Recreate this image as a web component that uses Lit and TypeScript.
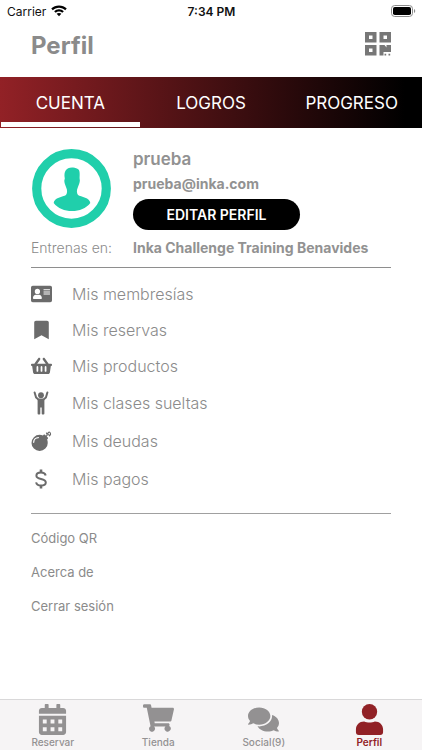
import { LitElement, css, html, svg } from "lit";
import { customElement } from "lit/decorators.js";
import { classMap } from "lit/directives/class-map.js";

const wifi = html`<svg class="wifi" viewBox="0 0 32 24" aria-hidden="true">
  <path d="M16 1C10 1 4.500 3.400 .5 7.200L3.600 10.500C6.800 7.400 11.200 5.500 16 5.500S25.200 7.400 28.400 10.500L31.500 7.200C27.500 3.400 22 1 16 1Z"/>
  <path d="M16 8.500C12.300 8.500 8.900 10 6.300 12.400L9.500 15.700C11.200 14.100 13.500 13.100 16 13.100S20.800 14.100 22.500 15.700L25.700 12.400C23.100 10 19.700 8.500 16 8.500Z"/>
  <path d="M16 15.800C14.200 15.800 12.500 16.500 11.300 17.600L16 22.600L20.700 17.600C19.500 16.500 17.800 15.800 16 15.800Z"/>
</svg>`;

const battery = html`<svg class="battery" viewBox="0 0 25 12" aria-hidden="true">
  <rect x=".5" y=".5" width="21" height="11" rx="3.200" fill="#fff" stroke="#8c8c8c"/>
  <rect x="2" y="2" width="18" height="8" rx="1.800"/>
  <path d="M23 4C24.700 4.600 24.700 7.400 23 8Z" fill="#8c8c8c"/>
</svg>`;

const qr = html`<svg class="qr" viewBox="0 0 26 24" aria-hidden="true">
  <path fill-rule="evenodd" d="M0 0H11.500V10.500H0ZM4 3.500V7H7.500V3.500ZM14.500 0H26V10.500H14.500ZM18.500 3.500V7H22V3.500ZM0 13H11.500V23.500H0ZM4 16.500V20H7.500V16.500Z"/>
  <path d="M14.500 13H19.500L21.500 15.500V13H26V20H18.500V23.500H14.500ZM19.500 21.800H21.200V23.500H19.500ZM23.500 21.800H25.200V23.500H23.500Z"/>
</svg>`;

const avatar = html`<svg class="avatar" viewBox="0 0 80 80" role="img" aria-label="Avatar">
  <circle cx="39.500" cy="39.500" r="34.800" fill="#fff" stroke="#20cfab" stroke-width="9.200"/>
  <path fill="#20cfab" d="M40 18.500C42.500 18 45 19.300 46.500 20.500C48.200 22.300 47.600 27 47.600 29.500C48.600 32.500 46.800 35.500 45.800 38.500C44.500 41 44.700 44.500 46 46C49 48 58 48.500 58.300 54C54 59.500 47.500 62 40 62S26 59.500 21.700 54C22 48.500 31 48 34 46C35.300 44.500 35.500 41 34.200 38.500C33.200 35.500 31.400 32.500 32.800 29.500C31.600 22.500 34 18.500 40 18.500Z"/>
</svg>`;

const shapes: Record<string, { box: string; art: unknown }> = {
  card: {
    box: "0 0 576 512",
    art: svg`<path fill-rule="evenodd" d="M48 32H528A48 48 0 0 1 576 80V432A48 48 0 0 1 528 480H48A48 48 0 0 1 0 432V80A48 48 0 0 1 48 32ZM176 112A72 72 0 1 0 176 256A72 72 0 1 0 176 112ZM54 368C54 384 60 392 76 392H276C292 392 298 384 298 368C298 316 262 284 221 278H131C90 284 54 316 54 368ZM344 124V152H520V124ZM344 184V212H520V184ZM344 244V272H520V244Z"/>`,
  },
  bookmark: {
    box: "-96 0 576 512",
    art: svg`<path d="M-8 512V48C-8 21.500 13.500 0 40 0H344C370.500 0 392 21.500 392 48V512L192 400Z"/>`,
  },
  basket: {
    box: "0 0 576 512",
    art: svg`<path fill-rule="evenodd" d="M576 216V232C576 245.300 565.300 256 552 256H544L518.400 435.200C515 458.800 494.700 476.400 470.900 476.400H105.100C81.300 476.400 61 458.800 57.600 435.200L32 256H24C10.700 256 0 245.300 0 232V216C0 202.700 10.700 192 24 192H91.300L198.200 45C208.600 30.700 228.700 27.500 243 37.900C257.200 48.300 260.400 68.300 250 82.600L170.500 192H405.500L326 82.600C315.600 68.300 318.800 48.300 333 37.900C347.300 27.500 367.300 30.700 377.800 45L484.700 192H552C565.300 192 576 202.700 576 216ZM312 392V280C312 248 264 248 264 280V392C264 424 312 424 312 392ZM424 392V280C424 248 376 248 376 280V392C376 424 424 424 424 392ZM200 392V280C200 248 152 248 152 280V392C152 424 200 424 200 392Z"/>`,
  },
  person: {
    box: "0 0 20 24",
    art: svg`<circle cx="9.500" cy="4.200" r="2.900"/><path d="M3.100 1.500L4.600 6.500L7 8.500H12L14.400 6.500L15.900 1.500" fill="none" stroke="currentColor" stroke-width="2" stroke-linecap="round" stroke-linejoin="round"/><path d="M6.100 8H12.900V22.600Q12.900 23.500 12 23.500H11Q10.200 23.500 10.200 22.500V16.500H8.800V22.500Q8.800 23.500 8 23.500H7Q6.100 23.500 6.100 22.600Z"/>`,
  },
  bomb: {
    box: "0 0 512 512",
    art: svg`<path fill-rule="evenodd" d="M208 96C238 96 266 102 292 113L311 94C320 85 335 85 345 94L418 167C427 177 427 192 418 201L399 220C410 246 416 274 416 304A208 208 0 1 1 208 96ZM72 288A104 104 0 0 1 176 184C198 184 198 152 176 152A136 136 0 0 0 40 288C40 310 72 310 72 288Z"/><path d="M375 135L405 98M396 84L384 52M414 66C440 8 500 26 486 102M440 86L462 124" fill="none" stroke="currentColor" stroke-width="30" stroke-linecap="round"/>`,
  },
  dollar: {
    box: "0 0 20 20",
    art: svg`<path d="M14.200 6.500C13.700 4.600 12 3.600 9.500 3.600C6.700 3.600 4.900 4.900 4.900 6.800C4.900 8.800 6.700 9.400 9.500 10C12.500 10.600 14.300 11.400 14.300 13.500C14.300 15.300 12.500 16.600 9.500 16.600C6.800 16.600 5 15.400 4.600 13.400" fill="none" stroke="currentColor" stroke-width="2"/><path d="M8.200 .5H10.800V4H8.200ZM8.200 16H10.800V19.500H8.200Z"/>`,
  },
  calendar: {
    box: "0 0 448 512",
    art: svg`<path fill-rule="evenodd" d="M0 464C0 490.500 21.500 512 48 512H400C426.500 512 448 490.500 448 464V192H0ZM320 256H384V320H320ZM320 384H384V448H320ZM192 256H256V320H192ZM192 384H256V448H192ZM64 256H128V320H64ZM64 384H128V448H64ZM400 64H352V16C352 7 345 0 336 0H304C295 0 288 7 288 16V64H160V16C160 7 153 0 144 0H112C103 0 96 7 96 16V64H48C21.500 64 0 85.500 0 112V160H448V112C448 85.500 426.500 64 400 64Z"/>`,
  },
  cart: {
    box: "0 0 576 512",
    art: svg`<path d="M528.100 301.300L575.400 93.300C578.800 78.300 567.400 64 552 64H159.200L150 19.200C147.800 8 137.900 0 126.500 0H24C10.700 0 0 10.700 0 24V40C0 53.300 10.700 64 24 64H69.900L140.200 407.400C123.400 417.100 112 435.200 112 456A56 56 0 1 0 207.200 416H416.800A56 56 0 1 0 487.400 405.800L492.900 381.300C496.300 366.300 484.900 352 469.500 352H218.100L211.500 320H504.700C515.900 320 525.600 312.200 528.100 301.300Z"/>`,
  },
  chat: {
    box: "0 0 576 512",
    art: svg`<path d="M416 192C416 103.600 322.900 32 208 32S0 103.600 0 192C0 226.300 14.100 257.900 38 284C24.600 314.200 2.800 337.900 2.500 338.200C-1.900 342.900 2 352 8 352C44.600 352 74.900 339.700 96.700 327C128.900 342.700 167 352 208 352C322.900 352 416 280.400 416 192ZM538 412C561.900 386 576 354.300 576 320C576 253.100 522.500 195.800 446.700 171.900C447.600 178.500 448 185.200 448 192C448 297.900 340.300 384 208 384C197.200 384 186.700 383.200 176.200 382.100C207.700 439.600 281.800 480 368 480C409.200 480 447.300 470.800 479.300 455C501.100 467.700 531.400 480 568 480C574 480 577.900 470.900 573.500 466.200C573.200 465.900 551.400 442.200 538 412Z"/>`,
  },
  user: {
    box: "0 0 28 32",
    art: svg`<circle cx="14" cy="8" r="7.900"/><path d="M8.500 18C11.500 19.300 16.500 19.300 19.500 18C24.500 18 28 21.500 28 26V29C28 31 27 32 25 32H3C1 32 0 31 0 29V26C0 21.500 3.500 18 8.500 18Z"/>`,
  },
};

const icon = (name: string) =>
  html`<svg class="icon ${name}" viewBox=${shapes[name].box} fill="currentColor" aria-hidden="true">${shapes[name].art}</svg>`;

@customElement("app-root")
export class AppRoot extends LitElement {
  static styles = css`
    * { box-sizing: border-box; }
    :host {
      display: flex;
      flex-direction: column;
      min-height: 100vh;
      background: #fff;
      color: #8b8b8b;
      font-family: Inter, "Liberation Sans", sans-serif;
      font-size: 16px;
    }
    svg { display: block; flex: none; }
    h1, h2, p, ul { margin: 0; padding: 0; }
    ul { list-style: none; }
    a { color: inherit; text-decoration: none; }
    button { border: 0; font: inherit; padding: 0; background: none; color: inherit; cursor: pointer; }
    .status {
      display: grid;
      grid-template-columns: 1fr auto 1fr;
      align-items: center;
      height: 22px;
      padding: 0 6px 0 7px;
      color: #111;
      font-size: 12px;
    }
    .carrier { display: flex; align-items: center; gap: 5px; }
    .wifi { width: 16px; height: 12px; }
    .time { font-weight: 600; }
    .battery { width: 25px; height: 12px; justify-self: end; }
    .header {
      display: flex;
      justify-content: space-between;
      align-items: center;
      height: 55px;
      padding: 0 31px 8px;
    }
    h1 { font-size: 24px; line-height: 32px; font-weight: 700; }
    .qr { width: 26px; height: 24px; margin-bottom: 4px; fill: #777; }
    .tabs {
      display: grid;
      grid-template-columns: repeat(3, 1fr);
      height: 51px;
      background: linear-gradient(90deg, #922126, #000 96%);
      color: #fff;
    }
    .tab {
      border-bottom: 5px solid transparent;
      margin: 0 1px 1px;
      padding-top: 6px;
      font-size: 17px;
    }
    .tab.on { border-color: #fff; }
    main { flex: 1; padding: 21px 31px; }
    .profile {
      display: grid;
      grid-template-columns: 102px 1fr;
      border-bottom: 1px solid #8e8e8e;
      padding-bottom: 9px;
    }
    .avatar { width: 80px; height: 80px; margin-left: 1px; }
    .who { display: flex; flex-direction: column; align-items: flex-start; }
    h2 { font-size: 17px; line-height: 20px; font-weight: 600; }
    .mail { font-size: 14px; line-height: 30px; font-weight: 700; }
    .edit {
      width: 167px;
      height: 31px;
      border-radius: 16px;
      background: #000;
      color: #fff;
      font-size: 14px;
      font-weight: 600;
    }
    .label, .gym { font-size: 14px; line-height: 20px; margin-top: 8px; white-space: nowrap; }
    .gym { font-weight: 700; }
    .mail, .gym, h2 { color: #929292; }
    .label { font-weight: 300; }
    .menu { padding: 8px 0 15px; border-bottom: 1px solid #a0a0a0; }
    .entry { display: flex; align-items: center; gap: 20px; height: 36px; font-weight: 300; }
    .entry.tall { height: 38px; }
    .entry .icon { width: 21px; height: 20px; color: #6b6b6b; }
    .entry .person { height: 24px; }
    .links { padding-top: 7px; font-size: 13px; }
    .link { display: block; line-height: 34px; }
    .bar {
      display: grid;
      grid-template-columns: repeat(4, 1fr);
      height: 51px;
      border-top: 1px solid #d9d8d9;
      background: #f6f4f5;
      color: #939192;
    }
    .dest {
      display: flex;
      flex-direction: column;
      align-items: center;
      padding-top: 4px;
      font-size: 10px;
      line-height: 14px;
      font-weight: 500;
    }
    .dest.on { color: #912126; font-weight: 600; }
    .dest .icon { width: 31px; height: 31px; }
    .dest .cart { height: 28px; margin-bottom: 3px; }
  `;

  private tabs = ["CUENTA", "LOGROS", "PROGRESO"];

  private entries: [string, string, boolean][] = [
    ["card", "Mis membresías", false],
    ["bookmark", "Mis reservas", false],
    ["basket", "Mis productos", false],
    ["person", "Mis clases sueltas", true],
    ["bomb", "Mis deudas", true],
    ["dollar", "Mis pagos", true],
  ];

  private links = ["Código QR", "Acerca de", "Cerrar sesión"];

  private places = [
    ["calendar", "Reservar"],
    ["cart", "Tienda"],
    ["chat", "Social(9)"],
    ["user", "Perfil"],
  ];

  render() {
    return html`
      <div class="status">
        <span class="carrier">Carrier ${wifi}</span>
        <span class="time">7:34 PM</span>
        ${battery}
      </div>
      <header class="header">
        <h1>Perfil</h1>
        <button aria-label="Código QR">${qr}</button>
      </header>
      <nav class="tabs">
        ${this.tabs.map((t, i) => html`<button class=${classMap({ tab: true, on: i === 0 })}>${t}</button>`)}
      </nav>
      <main>
        <section class="profile">
          ${avatar}
          <div class="who">
            <h2>prueba</h2>
            <p class="mail">prueba@inka.com</p>
            <button class="edit">EDITAR PERFIL</button>
          </div>
          <span class="label">Entrenas en:</span>
          <span class="gym">Inka Challenge Training Benavides</span>
        </section>
        <ul class="menu">
          ${this.entries.map(
            ([name, text, tall]) => html`<li>
              <a href="#" class=${classMap({ entry: true, tall })}>${icon(name)}<span>${text}</span></a>
            </li>`
          )}
        </ul>
        <ul class="links">
          ${this.links.map((l) => html`<li><a class="link" href="#">${l}</a></li>`)}
        </ul>
      </main>
      <nav class="bar">
        ${this.places.map(
          ([name, text], i) => html`<a href="#" class=${classMap({ dest: true, on: i === 3 })}>${icon(name)}<span>${text}</span></a>`
        )}
      </nav>
    `;
  }
}
